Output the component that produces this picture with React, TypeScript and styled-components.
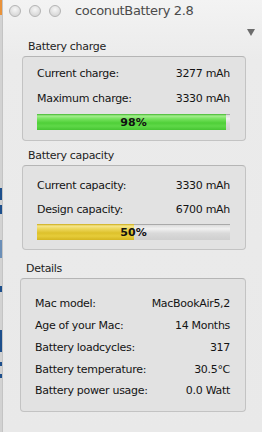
import styled, { createGlobalStyle } from 'styled-components';

const GlobalStyle = createGlobalStyle({
  'html, body': {
    margin: 0,
    padding: 0,
    background: '#ececec',
  },
  body: {
    fontFamily: '"DejaVu Sans", "Liberation Sans", sans-serif',
    color: '#141414',
    overflow: 'hidden',
  },
});

const Screen = styled.div({
  display: 'flex',
  width: 262,
  height: 432,
  overflow: 'hidden',
});

const DesktopEdge = styled.div({
  width: 2,
  flexShrink: 0,
  background:
    'linear-gradient(to bottom, #e9923a 0 15px, #d2d2d2 15px 188px, #1d4f8c 188px 200px, #d2d2d2 200px 205px, #1d4f8c 205px 214px, #d2d2d2 214px 240px, #6b8fb8 240px 258px, #d2d2d2 258px 286px, #1d4f8c 286px 292px, #d2d2d2 292px 330px, #1d4f8c 330px 352px, #d2d2d2 352px 362px, #1d4f8c 362px 366px, #d2d2d2 366px 374px, #1d4f8c 374px 378px, #d2d2d2 378px)',
});

const Window = styled.div({
  flex: 1,
  display: 'flex',
  flexDirection: 'column',
  background: 'linear-gradient(to bottom, #f3f3f3 0px, #ebebeb 60px, #e9e9e9 100%)',
  borderLeft: '1px solid #c4c4c4',
});

const TitleBar = styled.div({
  height: 22,
  display: 'flex',
  alignItems: 'center',
  paddingLeft: 6,
});

const Lights = styled.div({
  display: 'flex',
  gap: 8,
});

const Light = styled.span({
  width: 12,
  height: 12,
  borderRadius: '50%',
  boxSizing: 'border-box',
  border: '1px solid #b4b4b4',
  background: 'radial-gradient(circle at 50% 35%, #f6f6f6, #dadada 70%)',
});

const Title = styled.div({
  marginLeft: 14,
  fontSize: 13,
  letterSpacing: '-0.35px',
  color: '#4b4b4b',
  lineHeight: '22px',
});

const ArrowRow = styled.div({
  height: 18,
  display: 'flex',
  justifyContent: 'flex-end',
  alignItems: 'center',
  paddingTop: 2,
  paddingRight: 7,
  boxSizing: 'border-box',
});

const Arrow = styled.span({
  width: 0,
  height: 0,
  borderLeft: '4.5px solid transparent',
  borderRight: '4.5px solid transparent',
  borderTop: '7px solid #6c6c6c',
});

const Group = styled.section<{ $top: number; $left: number }>(({ $top, $left }) => ({
  marginTop: $top,
  marginLeft: $left,
  width: 243 - $left,
}));

const GroupLabel = styled.div({
  fontSize: 11,
  letterSpacing: '-0.3px',
  lineHeight: '14px',
  paddingLeft: 6,
  color: '#1e1e1e',
});

const Box = styled.div<{ $pad: number; $bottom: number; $inset: number }>(
  ({ $pad, $bottom, $inset }) => ({
    marginTop: 2,
    boxSizing: 'border-box',
    border: '1px solid #c3c3c3',
    borderTopColor: '#b5b5b5',
    borderRadius: 4,
    background: '#e2e2e2',
    padding: `${$pad}px 15px ${$bottom}px ${$inset}px`,
  }),
);

const Row = styled.div<{ $h: number }>(({ $h }) => ({
  height: $h,
  display: 'flex',
  alignItems: 'center',
  justifyContent: 'space-between',
  fontSize: 11,
  letterSpacing: '-0.3px',
  whiteSpace: 'nowrap',
}));

const Track = styled.div({
  position: 'relative',
  marginTop: 3,
  height: 16,
  boxSizing: 'border-box',
  borderTop: '1px solid #a9a9a9',
  background: 'linear-gradient(to bottom, #dcdcdc 0%, #f1f1f1 25%, #d9d9d9 55%, #cfcfcf 100%)',
});

const Fill = styled.div<{ $color: 'green' | 'yellow' }>(({ $color }) => ({
  position: 'absolute',
  left: 0,
  top: -1,
  bottom: 0,
  background:
    $color === 'green'
      ? 'linear-gradient(to bottom, #3fb52c 0px, #a4ee8e 2px, #74e25c 5px, #4fcf38 9px, #5fd848 12px, #46c532 100%)'
      : 'linear-gradient(to bottom, #c9a915 0px, #f6e68c 2px, #ecd65a 5px, #ddc12b 9px, #e6cc3a 12px, #d4b520 100%)',
}));

const Percent = styled.div({
  position: 'absolute',
  inset: 0,
  display: 'flex',
  alignItems: 'center',
  justifyContent: 'center',
  fontSize: 11,
  fontWeight: 700,
  color: '#111',
  lineHeight: '15px',
});

function Bar({ value, color }: { value: number; color: 'green' | 'yellow' }) {
  return (
    <Track>
      <Fill $color={color} style={{ width: `${value}%` }} />
      <Percent>{value}%</Percent>
    </Track>
  );
}

const details: [string, string][] = [
  ['Mac model:', 'MacBookAir5,2'],
  ['Age of your Mac:', '14 Months'],
  ['Battery loadcycles:', '317'],
  ['Battery temperature:', '30.5°C'],
  ['Battery power usage:', '0.0 Watt'],
];

export default function App() {
  return (
    <Screen>
      <GlobalStyle />
      <DesktopEdge />
      <Window>
        <TitleBar>
          <Lights>
            <Light />
            <Light />
            <Light />
          </Lights>
          <Title>coconutBattery 2.8</Title>
        </TitleBar>
        <ArrowRow>
          <Arrow />
        </ArrowRow>

        <Group $top={0} $left={19}>
          <GroupLabel>Battery charge</GroupLabel>
          <Box $pad={4} $bottom={10} $inset={14}>
            <Row $h={25}>
              <span>Current charge:</span>
              <span>3277 mAh</span>
            </Row>
            <Row $h={25}>
              <span>Maximum charge:</span>
              <span>3330 mAh</span>
            </Row>
            <Bar value={98} color="green" />
          </Box>
        </Group>

        <Group $top={8} $left={19}>
          <GroupLabel>Battery capacity</GroupLabel>
          <Box $pad={7} $bottom={9} $inset={14}>
            <Row $h={24}>
              <span>Current capacity:</span>
              <span>3330 mAh</span>
            </Row>
            <Row $h={24}>
              <span>Design capacity:</span>
              <span>6700 mAh</span>
            </Row>
            <Bar value={50} color="yellow" />
          </Box>
        </Group>

        <Group $top={12} $left={17}>
          <GroupLabel>Details</GroupLabel>
          <Box $pad={14} $bottom={9} $inset={14}>
            {details.map(([label, value]) => (
              <Row $h={21.75} key={label}>
                <span>{label}</span>
                <span>{value}</span>
              </Row>
            ))}
          </Box>
        </Group>
      </Window>
    </Screen>
  );
}
